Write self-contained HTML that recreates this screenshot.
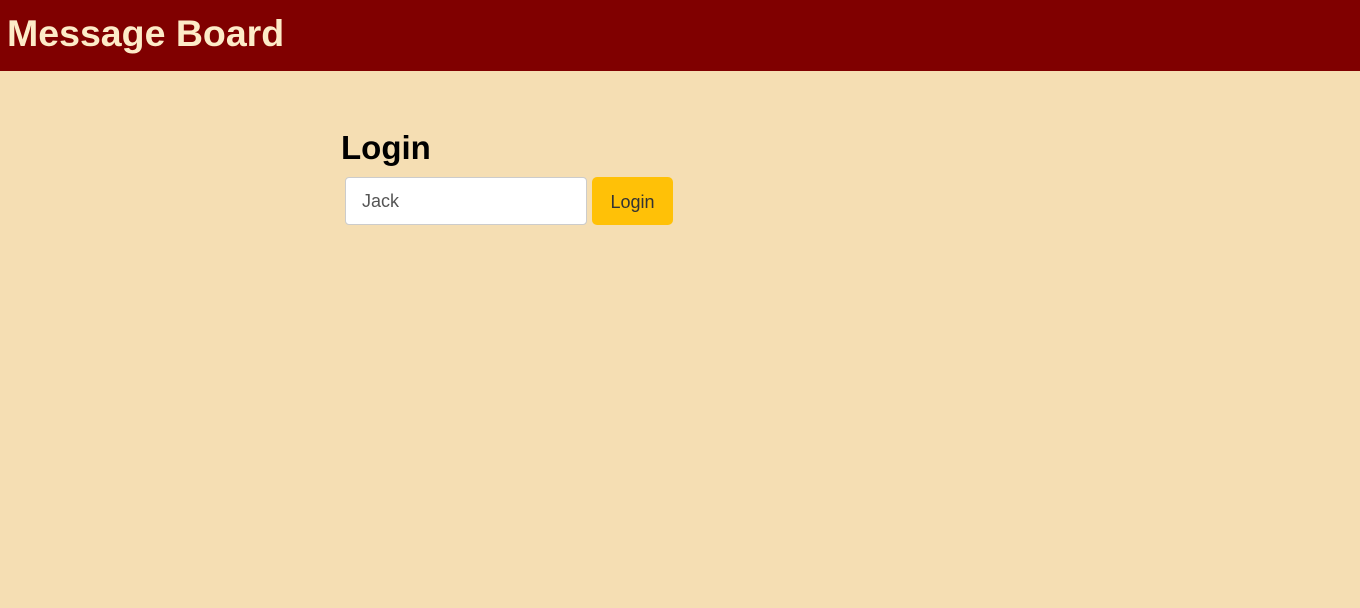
<!DOCTYPE html>
<html><head><style>
body{margin:0;background:#f5deb3;font-family:"Liberation Sans",sans-serif;width:1360px;height:608px;overflow:hidden;}
.hdr{height:71px;background:#800000;}
.hdr h1{margin:0;position:absolute;left:7px;top:11px;font-size:37.5px;font-weight:bold;color:#fdebc8;line-height:44px;}
h2{position:absolute;left:341px;top:126px;margin:0;font-size:33px;font-weight:bold;line-height:44px;color:#000;}
.inp{position:absolute;left:345px;top:177px;width:242px;height:48px;background:#fff;border:1px solid #ccc;border-radius:4px;box-sizing:border-box;font-size:18px;color:#555;padding:13px 16px;}
.btn{position:absolute;left:592px;top:177px;width:81px;height:48px;background:#ffc107;border-radius:5px;font-size:18px;color:#333;text-align:center;line-height:50px;}
</style></head><body>
<div class="hdr"><h1>Message Board</h1></div>
<h2>Login</h2>
<div class="inp">Jack</div>
<div class="btn">Login</div>
</body></html>
